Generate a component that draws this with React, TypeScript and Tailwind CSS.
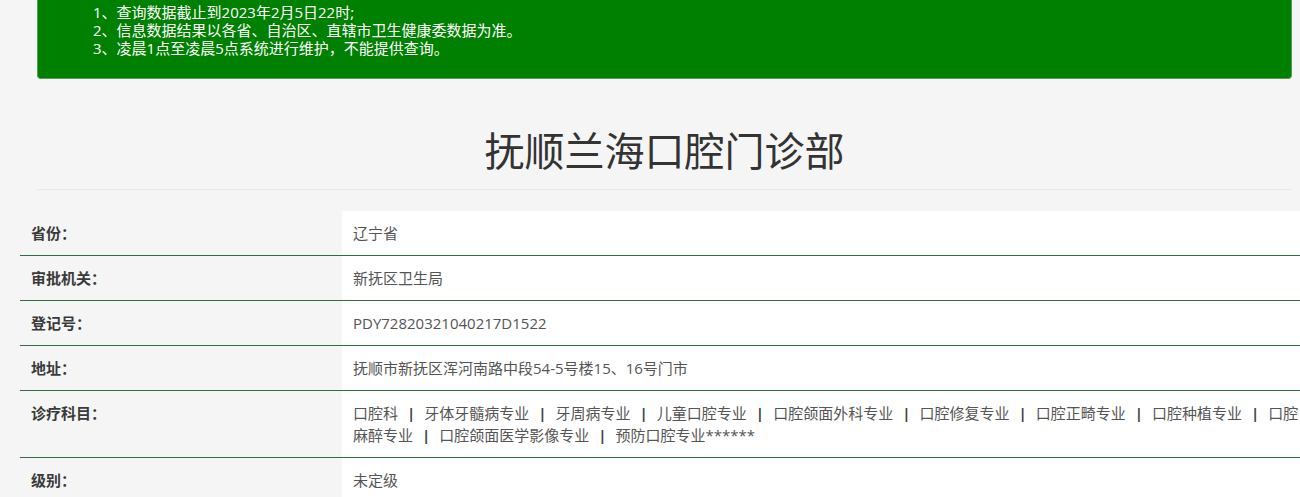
import { Fragment } from "react";

const notices = [
  "1、查询数据截止到2023年2月5日22时;",
  "2、信息数据结果以各省、自治区、直辖市卫生健康委数据为准。",
  "3、凌晨1点至凌晨5点系统进行维护，不能提供查询。",
];

const subjects = [
  "口腔科",
  "牙体牙髓病专业",
  "牙周病专业",
  "儿童口腔专业",
  "口腔颌面外科专业",
  "口腔修复专业",
  "口腔正畸专业",
  "口腔种植专业",
  "口腔麻醉专业",
  "口腔颌面医学影像专业",
  "预防口腔专业******",
];

function Subjects() {
  return (
    <>
      {subjects.map((s, i) => (
        <Fragment key={s}>
          {s}
          {i < subjects.length - 1 && (
            <span className="px-[9px] font-bold text-[#444]">|</span>
          )}
        </Fragment>
      ))}
    </>
  );
}

const rows: { label: string; value: React.ReactNode }[] = [
  { label: "省份：", value: "辽宁省" },
  { label: "审批机关：", value: "新抚区卫生局" },
  { label: "登记号：", value: "PDY72820321040217D1522" },
  { label: "地址：", value: "抚顺市新抚区浑河南路中段54-5号楼15、16号门市" },
  { label: "诊疗科目：", value: <Subjects /> },
  { label: "级别：", value: "未定级" },
];

export default function App() {
  return (
    <div className="min-h-screen overflow-hidden bg-[#f5f5f5] font-['Open_Sans','Noto_Sans_CJK_SC',sans-serif]">
      <div className="ml-[37px] w-[1255px]">
        {/* notice */}
        <div className="rounded-b-[4px] border border-t-0 border-[#5c9a5c] bg-[#008000] pt-[3px] pb-[21px] pl-[55px] text-[15px] leading-[18px] text-white">
          {notices.map((n) => (
            <p key={n}>{n}</p>
          ))}
        </div>

        <h1 className="mt-[50px] text-center text-[40px] leading-[44px] font-normal text-[#333]">
          抚顺兰海口腔门诊部
        </h1>
        <hr className="mt-[16px] border-0 border-t border-[#e9e9e9]" />
      </div>

      <table className="mt-[21px] ml-[20px] w-[1280px] border-collapse text-[15px] leading-[22px]">
        <tbody>
          {rows.map((r) => (
            <tr key={r.label} className="border-b border-[#2f6e45]">
              <td className="w-[322px] py-[11px] pl-[11px] align-top font-bold text-[#3a3a3a]">
                {r.label}
              </td>
              <td className="bg-white py-[11px] pl-[11px] pr-0 align-top text-[#555]">
                {r.value}
              </td>
            </tr>
          ))}
        </tbody>
      </table>
    </div>
  );
}
